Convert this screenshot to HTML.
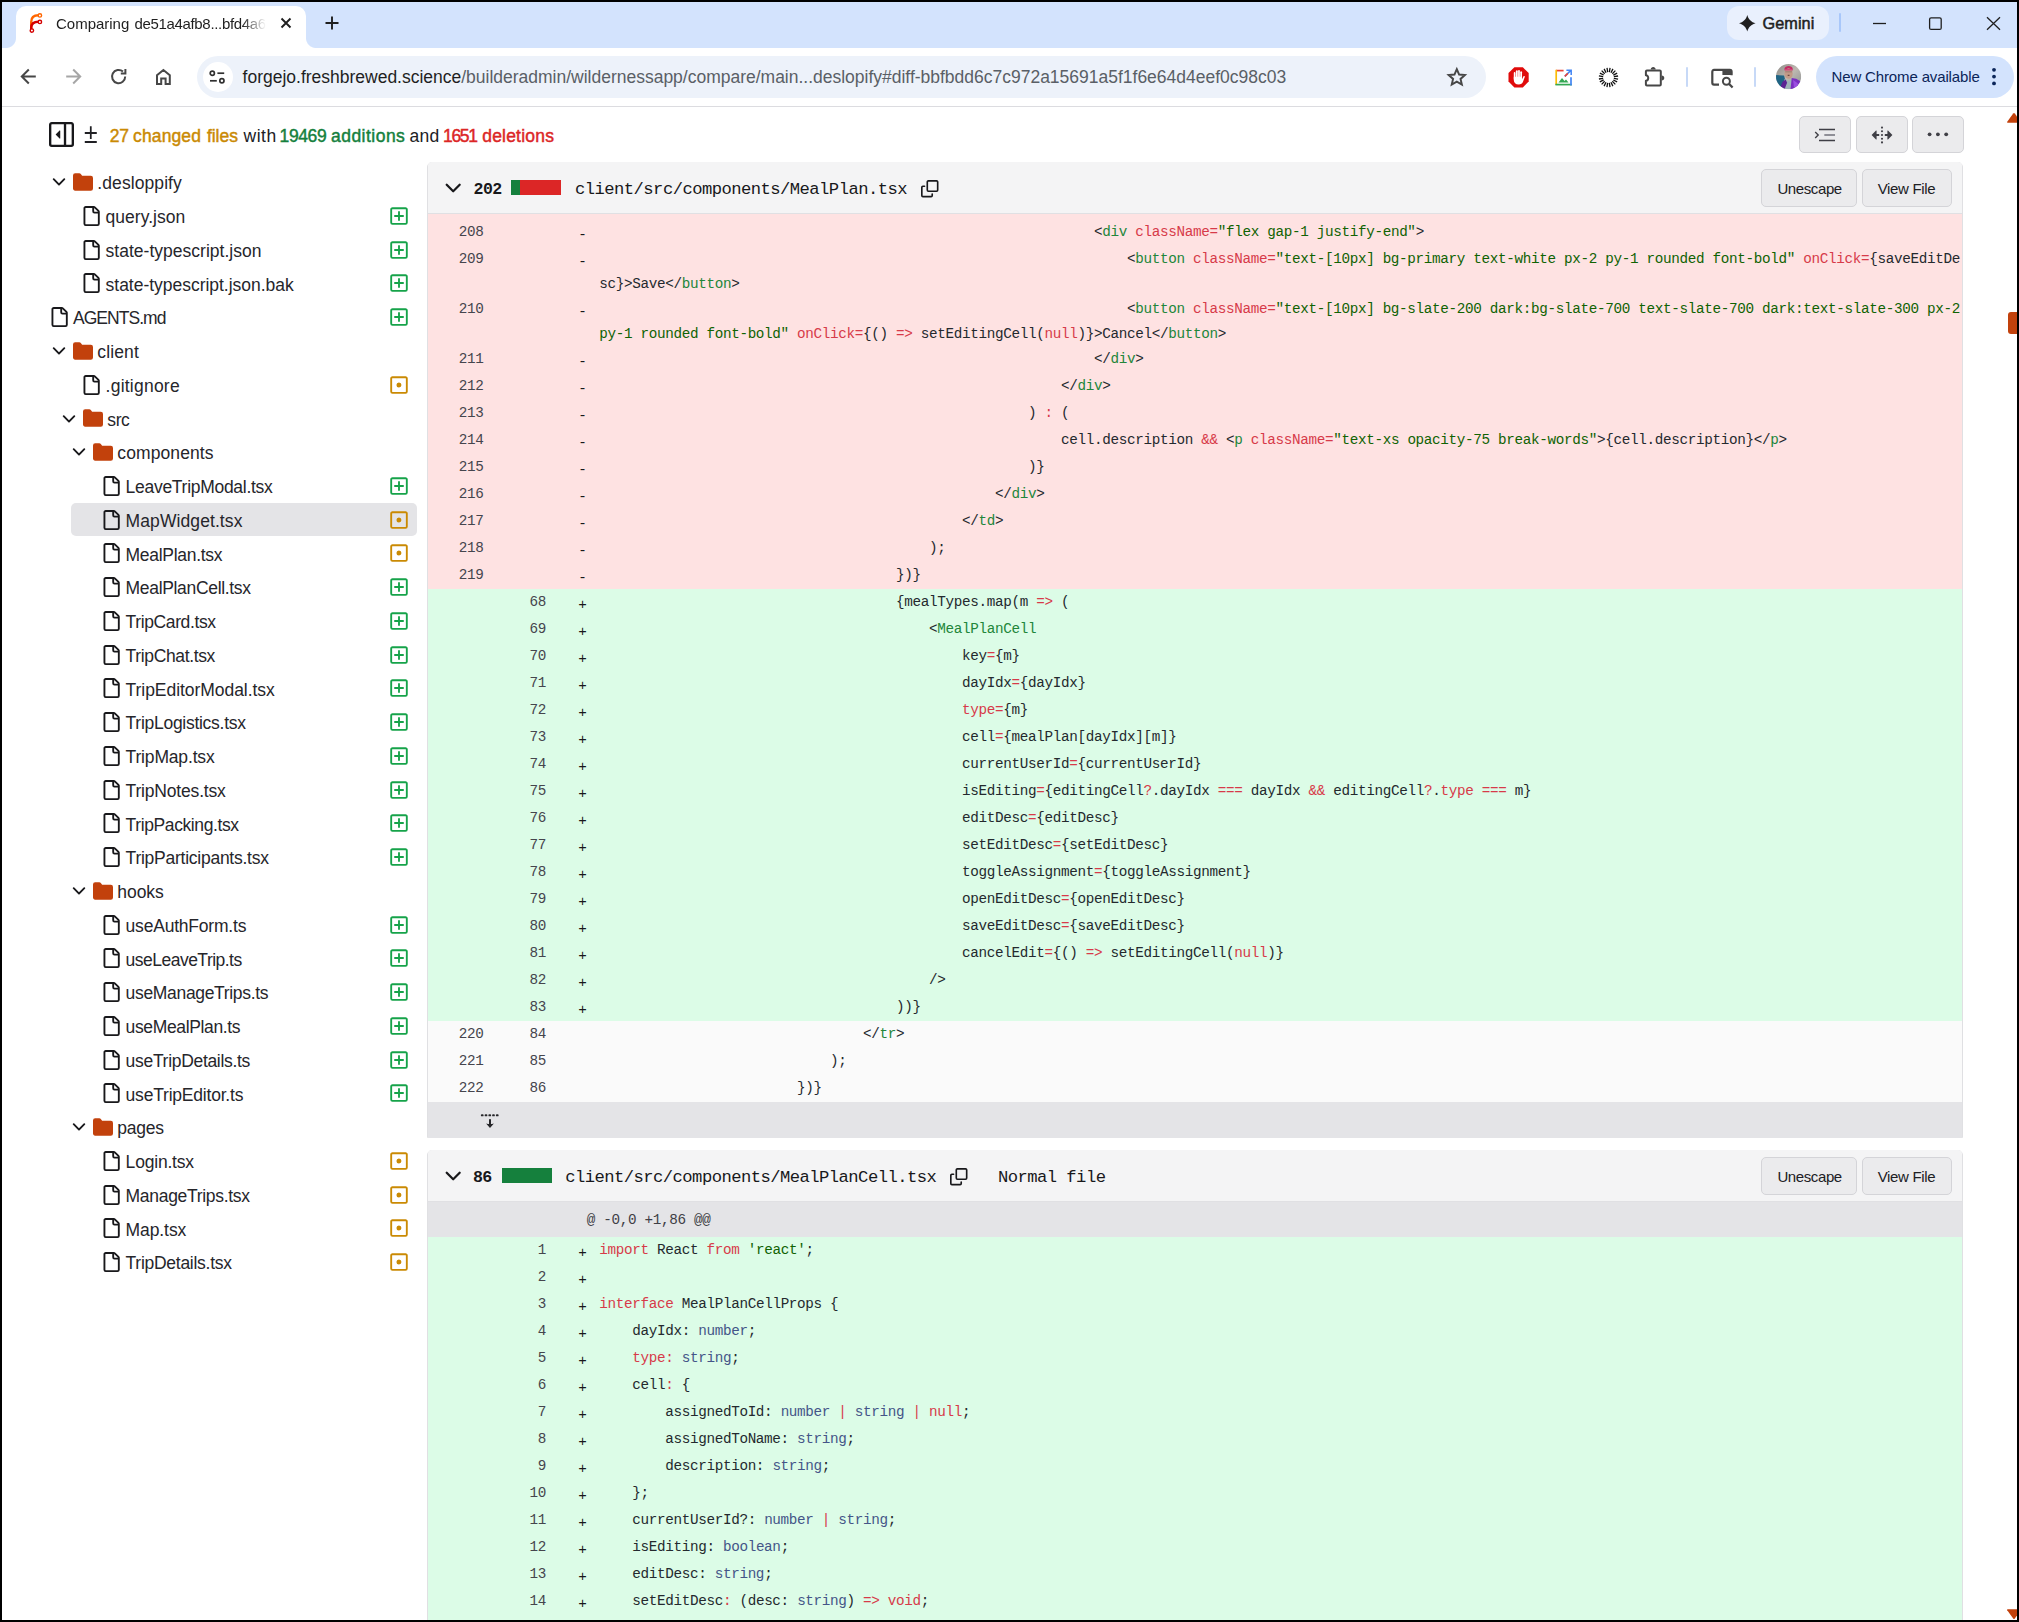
<!DOCTYPE html>
<html lang="en">
<head>
<meta charset="utf-8">
<title>Comparing de51a4afb8...bfd4a6</title>
<style>
html,body{margin:0;padding:0}
body{width:2019px;height:1622px;overflow:hidden;position:relative;background:#000;font-family:"Liberation Sans",sans-serif;color:#18181b}
.abs{position:absolute}
#win{position:absolute;left:2px;top:2px;width:2015px;height:1618px;background:#fff}
#strip{position:absolute;left:2px;top:2px;width:2015px;height:46px;background:#d3e3fd}
#tab{position:absolute;left:16px;top:5.5px;width:290px;height:43px;background:#fff;border-radius:10px 10px 0 0}
.tcl{position:absolute;top:38px;width:10px;height:10px}
#toolbar{position:absolute;left:2px;top:48px;width:2015px;height:58px;background:#fff}
#tbline{position:absolute;left:2px;top:106px;width:2015px;height:1px;background:#dcdce0}
#omni{position:absolute;left:196.5px;top:56px;width:1289.5px;height:41.6px;border-radius:21px;background:#edf2fa}
.t{position:absolute;white-space:pre;line-height:1;transform-origin:0 0}
svg{position:absolute;overflow:visible}
/* sidebar */
.row{position:absolute;height:32.5px}
.sel{position:absolute;left:71px;width:346px;height:32.5px;background:#e4e4e7;border-radius:5px}
.fn{position:absolute;white-space:pre;font-size:17.5px;line-height:20px;color:#26262b}
/* diff */
.box{position:absolute;left:427px;width:1536px;box-sizing:border-box;border:1px solid #e0e0e3;background:#fafafa}
.hdr{position:absolute;left:428px;width:1534px;background:#f4f4f5;border-bottom:1px solid #e0e0e3;box-sizing:border-box;border-radius:4px 4px 0 0}
.btn{position:absolute;box-sizing:border-box;background:#ebebed;border:1px solid #d4d4d8;border-radius:5px}
.m{font-family:"Liberation Mono",monospace}
.ln{position:absolute;left:428px;width:1534px;height:27px}
.ln>div,.ln>code{position:absolute;top:0;font-family:"Liberation Mono",monospace;font-size:14.3px;letter-spacing:-0.333px;line-height:27px;white-space:pre}
.ln>.a{left:0;width:55.6px;text-align:right;color:#45454d}
.ln>.b{left:70px;width:48px;text-align:right;color:#45454d}
.ln>.g{left:150.2px;top:2.6px;color:#18181b}
.ln>code{left:171.2px;color:#24292e}
.del{background:#fee2e2}
.add{background:#dcfce7}
.ctx{background:#fafafa}
.k{color:#d73a49}.nt{color:#22863a}.st{color:#106303}.kt{color:#445588}
</style>
</head>
<body>
<div id="win"></div>
<div id="strip"></div>
<div id="tab"></div>
<div class="tcl" style="left:6px;background:radial-gradient(circle at 0 0,#d3e3fd 9.5px,#fff 10.5px)"></div>
<div class="tcl" style="left:306px;background:radial-gradient(circle at 100% 0,#d3e3fd 9.5px,#fff 10.5px)"></div>
<div id="toolbar"></div>
<div id="tbline"></div>
<div id="omni"></div>

<!-- tab -->
<svg style="left:29px;top:11.3px" width="14" height="24" viewBox="0 0 14 24">
<path d="M2.2 19V11C2.2 6.5 5 4.3 9.6 4.3" fill="none" stroke="#ff6600" stroke-width="2.4"/>
<path d="M2.2 19V17C2.2 12.5 5 10.8 9.6 10.8" fill="none" stroke="#d40000" stroke-width="2.4"/>
<circle cx="10.9" cy="4.4" r="1.7" fill="#fff" stroke="#ff6600" stroke-width="1.4"/>
<circle cx="10.9" cy="10.9" r="1.7" fill="#fff" stroke="#d40000" stroke-width="1.4"/>
<circle cx="2.9" cy="19.6" r="1.7" fill="#fff" stroke="#d40000" stroke-width="1.4"/>
</svg>
<div class="t" id="tabtitle" style="left:56px;top:12.8px;font-size:15px;letter-spacing:-0.2px;color:#1f1f1f;width:212px;height:22px;padding-top:3px;overflow:hidden;-webkit-mask-image:linear-gradient(90deg,#000 186px,transparent 210px);mask-image:linear-gradient(90deg,#000 186px,transparent 210px)"><span style="letter-spacing:-0.01px;word-spacing:1px">Comparing </span><span style="letter-spacing:-0.33px">de51a4afb8...bfd4a6c</span></div>
<svg style="left:280px;top:17px" width="12" height="12" viewBox="0 0 12 12"><path d="M1.5 1.5L10.5 10.5M10.5 1.5L1.5 10.5" stroke="#1f1f1f" stroke-width="1.9" fill="none"/></svg>
<svg style="left:325px;top:16px" width="14" height="14" viewBox="0 0 14 14"><path d="M7 0.5V13.5M0.5 7H13.5" stroke="#1f1f1f" stroke-width="1.9" fill="none"/></svg>
<!-- gemini -->
<div class="abs" style="left:1727px;top:6px;width:102px;height:34px;border-radius:12px;background:#e9f0fd"></div>
<svg style="left:1738.8px;top:14.8px" width="16.6" height="16.6" viewBox="0 0 16 16"><path d="M8 0C9 4 12 7 16 8C12 9 9 12 8 16C7 12 4 9 0 8C4 7 7 4 8 0Z" fill="#1f1f1f"/></svg>
<div class="t" style="left:1762.5px;top:15px;font-size:16.25px;color:#1f1f1f;letter-spacing:0.06px;-webkit-text-stroke:0.5px #1f1f1f">Gemini</div>
<div class="abs" style="left:1839px;top:13px;width:2px;height:19px;background:#a8c7fa;border-radius:1px"></div>
<!-- window controls -->
<svg style="left:1873px;top:17px" width="130" height="14" viewBox="0 0 130 14">
<path d="M0 6.5H13" stroke="#1f1f1f" stroke-width="1.3" fill="none"/>
<rect x="56.6" y="0.8" width="11.6" height="11.6" rx="1.5" fill="none" stroke="#1f1f1f" stroke-width="1.3"/>
<path d="M114 0.3L127 12.7M127 0.3L114 12.7" stroke="#1f1f1f" stroke-width="1.3" fill="none"/>
</svg>
<!-- nav icons -->
<svg style="left:20px;top:68px" width="160" height="18" viewBox="0 0 160 18">
<g fill="none" stroke="#474747" stroke-width="2">
<path d="M15.8 8.5H2M8.8 1.5L1.8 8.5L8.8 15.5"/>
<path d="M46.2 8.5H60M53.2 1.5L60.2 8.5L53.2 15.5" stroke="#a6a6a6"/>
<path d="M105.2 8.5A6.6 6.6 0 1 1 103 3.6M105.4 1V5.6H100.8"/>
<path d="M137 16V7.2L143.4 2L149.8 7.2V16H145.6V10.6H141.2V16Z"/>
</g></svg>
<div class="abs" style="left:203px;top:62px;width:29.5px;height:29.5px;border-radius:15px;background:#fff"></div>
<svg style="left:209px;top:69px" width="17" height="16" viewBox="0 0 17 16">
<g fill="none" stroke="#303030" stroke-width="1.7"><circle cx="3.3" cy="4.2" r="2.1"/><path d="M8.4 4.2H15.2"/><circle cx="12.9" cy="11.8" r="2.1"/><path d="M1 11.8H7.8"/></g></svg>
<div class="t" id="url" style="left:242.6px;top:69.2px;font-size:17.5px;color:#1f1f1f;letter-spacing:-0.008px">forgejo.freshbrewed.science<span style="color:#5a5f66">/builderadmin/wildernessapp/compare/main...deslopify#diff-bbfbdd6c7c972a15691a5f1f6e64d4eef0c98c03</span></div>
<!-- star -->
<svg style="left:1446.6px;top:67.4px" width="19.6" height="19" viewBox="0 0 21 20"><path d="M10.5 2.2L13 7.9L19.2 8.5L14.5 12.6L15.9 18.6L10.5 15.4L5.1 18.6L6.5 12.6L1.8 8.5L8 7.9Z" fill="none" stroke="#474747" stroke-width="2.1" stroke-linejoin="miter"/></svg>
<!-- adblock -->
<svg style="left:1508px;top:67px" width="21.2" height="20.6" viewBox="0 0 21 21"><path d="M6.2 0.2H14.8L20.8 6.2V14.8L14.8 20.8H6.2L0.2 14.8V6.2Z" fill="#e00b0b"/><g fill="#fff"><rect x="5.6" y="5.2" width="1.8" height="8" rx=".9"/><rect x="7.8" y="3.4" width="1.8" height="9" rx=".9"/><rect x="10" y="3" width="1.8" height="9" rx=".9"/><rect x="12.2" y="4.4" width="1.8" height="9" rx=".9"/><path d="M5.6 10H14V12.4L15.4 9.6C15.9 8.7 17.2 9.2 16.8 10.3L15 15C14.3 16.7 12.8 17.8 10.6 17.8C7.4 17.8 5.6 15.9 5.6 13.2Z"/></g></svg>
<!-- color picture icon -->
<svg style="left:1555px;top:69px" width="17" height="17" viewBox="0 0 17 17">
<path d="M1 1.6H8.6" stroke="#ea4335" stroke-width="1.7"/><path d="M1.2 0.8V16" stroke="#fbbc05" stroke-width="1.7"/><path d="M0.4 15.6H16.8" stroke="#34a853" stroke-width="1.7"/><path d="M16 8.2V16.4" stroke="#4285f4" stroke-width="1.7"/>
<path d="M3.5 13.5L7 9L9.5 12L11 10.5L13.5 13.5Z" fill="#34a853"/>
<path d="M9.8 7.4L15.8 1.4M11.4 1.2H16.2V6" stroke="#4285f4" stroke-width="1.5" fill="none"/><path d="M9.8 7.4L12.8 4.4" stroke="#ea4335" stroke-width="1.5"/>
</svg>
<!-- sun icon -->
<svg style="left:1598px;top:67px" width="21" height="21" viewBox="-10.5 -10.5 21 21" id="sun"><path d="M5.33 0.86L9.58 1.55M4.80 2.47L8.63 4.43M3.81 3.83L6.84 6.88M2.44 4.82L4.38 8.66M0.83 5.34L1.49 9.58M-0.86 5.33L-1.55 9.58M-2.47 4.80L-4.43 8.63M-3.83 3.81L-6.88 6.84M-4.82 2.44L-8.66 4.38M-5.34 0.83L-9.58 1.49M-5.33 -0.86L-9.58 -1.55M-4.80 -2.47L-8.63 -4.43M-3.81 -3.83L-6.84 -6.88M-2.44 -4.82L-4.38 -8.66M-0.83 -5.34L-1.49 -9.58M0.86 -5.33L1.55 -9.58M2.47 -4.80L4.43 -8.63M3.83 -3.81L6.88 -6.84M4.82 -2.44L8.66 -4.38M5.34 -0.83L9.58 -1.49" stroke="#111" stroke-width="1.3" fill="none"/></svg>
<!-- puzzle -->
<svg style="left:1644px;top:65.5px" width="22" height="22" viewBox="0 0 22 22"><path d="M1.9 5.4Q1.9 4.4 2.9 4.4H15.8Q16.8 4.4 16.8 5.4V18.4Q16.8 19.4 15.8 19.4H2.9Q1.9 19.4 1.9 18.4V14.7C5 14.7 5 9.3 1.9 9.3Z" fill="none" stroke="#474747" stroke-width="2" stroke-linejoin="round"/><path d="M6.7 3.6C6.7 0 11.7 0 11.7 3.6ZM17.6 9.4C21.2 9.4 21.2 14.4 17.6 14.4Z" fill="#474747"/></svg>
<div class="abs" style="left:1686px;top:67px;width:2px;height:20px;background:#c7d9f7;border-radius:1px"></div>
<div class="abs" style="left:1754px;top:67px;width:2px;height:20px;background:#c7d9f7;border-radius:1px"></div>
<!-- tab search -->
<svg style="left:1711px;top:68px" width="23" height="21" viewBox="0 0 23 21"><path d="M8 16.6H3C2 16.6 1.3 15.8 1.3 14.8V3.7C1.3 2.7 2 1.9 3 1.9H18.8C19.8 1.9 20.6 2.7 20.6 3.7V7.2" fill="none" stroke="#474747" stroke-width="2.2"/><path d="M11.4 1.9H20.6V7H11.4Z" fill="#474747"/><circle cx="15.4" cy="13.2" r="3.5" fill="none" stroke="#474747" stroke-width="2"/><path d="M17.9 15.8L21.6 19.5" stroke="#474747" stroke-width="2.3"/></svg>
<!-- avatar -->
<svg style="left:1776px;top:63.8px" width="25.2" height="25.2" viewBox="0 0 25 25"><defs><clipPath id="avc"><circle cx="12.5" cy="12.5" r="12.5"/></clipPath><linearGradient id="avg" x1="0" y1="0" x2="1" y2="1"><stop offset="0" stop-color="#8c8a86"/><stop offset="0.5" stop-color="#bdb8b0"/><stop offset="1" stop-color="#8a8f93"/></linearGradient></defs><g clip-path="url(#avc)"><rect width="25" height="25" fill="url(#avg)"/><path d="M0 11L8 11.5L9.5 17L4 25H0Z" fill="#1f6484"/><path d="M8.4 4.6C8.8 1 16.2 1 16.6 4.6L16.3 6.2H8.7Z" fill="#c22a63"/><ellipse cx="12.5" cy="9.4" rx="4.1" ry="5.2" fill="#c29a88"/><path d="M8.6 5H16.4V6.4H8.6Z" fill="#d2447a"/><path d="M9.2 7.4H15.8V8.3H9.2Z" fill="#8f7068"/><path d="M11.6 10.6H13.4V12H11.6Z" fill="#6e4a40"/><path d="M8.5 15L12.5 17L16 14.6L17 25H5.5Z" fill="#9db3b8"/><path d="M3.5 25L6.5 17.5L9.6 15.4L11 18.5L8.5 25Z" fill="#5b2393"/><path d="M25 25V17.5L20 14.6L15.6 14L14.4 25Z" fill="#7a2ec0"/><path d="M17 16L21.5 19L23 25H18Z" fill="#9a4ee0"/></g></svg>
<!-- update pill -->
<div class="abs" style="left:1816px;top:55.5px;width:198px;height:42px;border-radius:21px;background:#d3e3fd"></div>
<div class="t" style="left:1831.5px;top:68.6px;font-size:15px;color:#0b2559;letter-spacing:-0.14px" id="ncr">New Chrome available</div>
<svg style="left:1991px;top:66px" width="6" height="21" viewBox="0 0 6 21"><circle cx="3" cy="3.8" r="1.9" fill="#0b2559"/><circle cx="3" cy="10.6" r="1.9" fill="#0b2559"/><circle cx="3" cy="17.4" r="1.9" fill="#0b2559"/></svg>

<!-- page header -->
<svg style="left:49px;top:122px" width="25" height="25" viewBox="0 0 16 16"><path d="M6.823 7.823a.25.25 0 0 1 0 .354l-2.396 2.396A.25.25 0 0 1 4 10.396V5.604a.25.25 0 0 1 .427-.177Z" fill="#18181b" transform="translate(11.2 0) scale(-1 1)"/><path d="M1.75 0h12.5C15.216 0 16 .784 16 1.75v12.5A1.75 1.75 0 0 1 14.25 16H1.75A1.75 1.75 0 0 1 0 14.25V1.75C0 .784.784 0 1.75 0ZM1.5 1.75v12.5c0 .138.112.25.25.25H9.5v-13H1.75a.25.25 0 0 0-.25.25ZM11 14.5h3.25a.25.25 0 0 0 .25-.25V1.75a.25.25 0 0 0-.25-.25H11Z" fill="#18181b"/></svg>
<div class="t" id="pm" style="left:84.3px;top:119.2px;font-size:19px;color:#202024;transform:scale(1.3,1.5)">±</div>
<div class="t" style="left:109.7px;top:128.1px;font-size:17.5px;color:#ca8a04;-webkit-text-stroke:0.45px #ca8a04;letter-spacing:-0.100px">27</div>
<div class="t" style="left:133.1px;top:128.1px;font-size:17.5px;color:#ca8a04;-webkit-text-stroke:0.45px #ca8a04;letter-spacing:0.117px">changed</div>
<div class="t" style="left:206.9px;top:128.1px;font-size:17.5px;color:#ca8a04;-webkit-text-stroke:0.45px #ca8a04;letter-spacing:-0.025px">files</div>
<div class="t" style="left:243.6px;top:128.1px;font-size:17.5px;color:#202024;letter-spacing:0.500px">with</div>
<div class="t" style="left:279.6px;top:128.1px;font-size:17.5px;color:#15803d;-webkit-text-stroke:0.45px #15803d;letter-spacing:-0.4px">19469</div>
<div class="t" style="left:331.0px;top:128.1px;font-size:17.5px;color:#15803d;-webkit-text-stroke:0.45px #15803d;letter-spacing:0.475px">additions</div>
<div class="t" style="left:409.6px;top:128.1px;font-size:17.5px;color:#202024;letter-spacing:0.200px">and</div>
<div class="t" style="left:443px;top:128.1px;font-size:17.5px;color:#dc2626;-webkit-text-stroke:0.45px #dc2626;letter-spacing:-1.3px">1651</div>
<div class="t" style="left:482.2px;top:128.1px;font-size:17.5px;color:#dc2626;-webkit-text-stroke:0.45px #dc2626;letter-spacing:0.212px">deletions</div>
<!-- toolbar buttons -->
<div class="btn" style="left:1799px;top:116px;width:52px;height:37px"></div>
<div class="btn" style="left:1856px;top:116px;width:52px;height:37px"></div>
<div class="btn" style="left:1912px;top:116px;width:52px;height:37px"></div>
<svg style="left:1814px;top:127px" width="23" height="16" viewBox="0 0 23 16"><g fill="none" stroke="#3f3f46" stroke-width="1.5"><path d="M5 2.4H21M5 13.5H21"/><path d="M10.3 8H21" stroke="#71717a"/><path d="M1.2 4.9L4.2 8L1.2 11.1" stroke-width="1.4"/></g></svg>
<svg style="left:1871px;top:126px" width="22" height="18" viewBox="0 0 22 18"><g fill="#3f3f46"><path d="M0.6 9L5 4.6Q5.6 4.2 5.6 5V7.9H8.2V10.1H5.6V13Q5.6 13.8 5 13.4Z"/><path d="M21.4 9L17 4.6Q16.4 4.2 16.4 5V7.9H13.8V10.1H16.4V13Q16.4 13.8 17 13.4Z"/><circle cx="11" cy="1.6" r="1.05"/><circle cx="11" cy="5.3" r="1.05"/><circle cx="11" cy="9" r="1.05"/><circle cx="11" cy="12.7" r="1.05"/><circle cx="11" cy="16.4" r="1.05"/></g></svg>
<svg style="left:1927px;top:132px" width="22" height="5" viewBox="0 0 22 5"><circle cx="2.6" cy="2.3" r="1.9" fill="#3f3f46"/><circle cx="10.9" cy="2.3" r="1.9" fill="#3f3f46"/><circle cx="19.2" cy="2.3" r="1.9" fill="#3f3f46"/></svg>
<!-- scrollbar -->
<svg style="left:2005px;top:112px" width="12" height="12" viewBox="0 0 12 12"><path d="M2.2 9.8L8.2 1.6Q9 0.6 9.8 1.6L12 4.6V10.8H2.8Q1.6 10.8 2.2 9.8Z" fill="#c2410c"/></svg>
<div class="abs" style="left:2008px;top:311.5px;width:9px;height:22px;border-radius:3px 0 0 3px;background:#c2410c"></div>
<svg style="left:2005px;top:1608px" width="12" height="12" viewBox="0 0 12 12"><path d="M2.2 2.2L8.2 10.4Q9 11.4 9.8 10.4L12 7.4V1.2H2.8Q1.6 1.2 2.2 2.2Z" fill="#c2410c"/></svg>

<svg style="left:48.50px;top:172.40px" width="20" height="20" viewBox="0 0 16 16"><path d="M12.78 5.22a.749.749 0 0 1 0 1.06l-4.25 4.25a.749.749 0 0 1-1.06 0L3.22 6.28a.749.749 0 1 1 1.06-1.06L8 8.939l3.72-3.719a.749.749 0 0 1 1.06 0Z" fill="#18181b"/></svg>
<svg style="left:73.00px;top:172.10px" width="20" height="20" viewBox="0 0 16 16"><path d="M1.75 1A1.75 1.75 0 0 0 0 2.75v10.5C0 14.216.784 15 1.75 15h12.5A1.75 1.75 0 0 0 16 13.25v-8.5A1.75 1.75 0 0 0 14.25 3H7.5a.25.25 0 0 1-.2-.1l-.9-1.2C6.07 1.26 5.55 1 5 1H1.75Z" fill="#c2410c"/></svg>
<div class="fn" style="left:97.30px;top:173.30px;letter-spacing:0.084px">.desloppify</div>
<svg style="left:80.70px;top:205.85px" width="20" height="20" viewBox="0 0 16 16"><path d="M2 1.75C2 .784 2.784 0 3.75 0h6.586c.464 0 .909.184 1.237.513l2.914 2.914c.329.328.513.773.513 1.237v9.586A1.75 1.75 0 0 1 13.25 16h-9.5A1.75 1.75 0 0 1 2 14.25Zm1.75-.25a.25.25 0 0 0-.25.25v12.5c0 .138.112.25.25.25h9.5a.25.25 0 0 0 .25-.25V6h-2.75A1.75 1.75 0 0 1 9 4.25V1.5Zm6.75.062V4.25c0 .138.112.25.25.25h2.688l-.011-.013-2.914-2.914-.013-.011Z" fill="#18181b"/></svg>
<div class="fn" style="left:105.60px;top:207.05px;letter-spacing:0.015px">query.json</div>
<svg style="left:388.75px;top:205.85px" width="20" height="20" viewBox="0 0 16 16"><path d="M2.75 1h10.5c.966 0 1.75.784 1.75 1.75v10.5A1.75 1.75 0 0 1 13.25 15H2.75A1.75 1.75 0 0 1 1 13.25V2.75C1 1.784 1.784 1 2.75 1Zm10.5 1.5H2.75a.25.25 0 0 0-.25.25v10.5c0 .138.112.25.25.25h10.5a.25.25 0 0 0 .25-.25V2.75a.25.25 0 0 0-.25-.25ZM8 4a.75.75 0 0 1 .75.75v2.5h2.5a.75.75 0 0 1 0 1.5h-2.5v2.5a.75.75 0 0 1-1.5 0v-2.5h-2.5a.75.75 0 0 1 0-1.5h2.5v-2.5A.75.75 0 0 1 8 4Z" fill="#16a34a"/></svg>
<svg style="left:80.70px;top:239.60px" width="20" height="20" viewBox="0 0 16 16"><path d="M2 1.75C2 .784 2.784 0 3.75 0h6.586c.464 0 .909.184 1.237.513l2.914 2.914c.329.328.513.773.513 1.237v9.586A1.75 1.75 0 0 1 13.25 16h-9.5A1.75 1.75 0 0 1 2 14.25Zm1.75-.25a.25.25 0 0 0-.25.25v12.5c0 .138.112.25.25.25h9.5a.25.25 0 0 0 .25-.25V6h-2.75A1.75 1.75 0 0 1 9 4.25V1.5Zm6.75.062V4.25c0 .138.112.25.25.25h2.688l-.011-.013-2.914-2.914-.013-.011Z" fill="#18181b"/></svg>
<div class="fn" style="left:105.60px;top:240.80px;letter-spacing:0.013px">state-typescript.json</div>
<svg style="left:388.75px;top:239.60px" width="20" height="20" viewBox="0 0 16 16"><path d="M2.75 1h10.5c.966 0 1.75.784 1.75 1.75v10.5A1.75 1.75 0 0 1 13.25 15H2.75A1.75 1.75 0 0 1 1 13.25V2.75C1 1.784 1.784 1 2.75 1Zm10.5 1.5H2.75a.25.25 0 0 0-.25.25v10.5c0 .138.112.25.25.25h10.5a.25.25 0 0 0 .25-.25V2.75a.25.25 0 0 0-.25-.25ZM8 4a.75.75 0 0 1 .75.75v2.5h2.5a.75.75 0 0 1 0 1.5h-2.5v2.5a.75.75 0 0 1-1.5 0v-2.5h-2.5a.75.75 0 0 1 0-1.5h2.5v-2.5A.75.75 0 0 1 8 4Z" fill="#16a34a"/></svg>
<svg style="left:80.70px;top:273.35px" width="20" height="20" viewBox="0 0 16 16"><path d="M2 1.75C2 .784 2.784 0 3.75 0h6.586c.464 0 .909.184 1.237.513l2.914 2.914c.329.328.513.773.513 1.237v9.586A1.75 1.75 0 0 1 13.25 16h-9.5A1.75 1.75 0 0 1 2 14.25Zm1.75-.25a.25.25 0 0 0-.25.25v12.5c0 .138.112.25.25.25h9.5a.25.25 0 0 0 .25-.25V6h-2.75A1.75 1.75 0 0 1 9 4.25V1.5Zm6.75.062V4.25c0 .138.112.25.25.25h2.688l-.011-.013-2.914-2.914-.013-.011Z" fill="#18181b"/></svg>
<div class="fn" style="left:105.60px;top:274.55px;letter-spacing:-0.024px">state-typescript.json.bak</div>
<svg style="left:388.75px;top:273.35px" width="20" height="20" viewBox="0 0 16 16"><path d="M2.75 1h10.5c.966 0 1.75.784 1.75 1.75v10.5A1.75 1.75 0 0 1 13.25 15H2.75A1.75 1.75 0 0 1 1 13.25V2.75C1 1.784 1.784 1 2.75 1Zm10.5 1.5H2.75a.25.25 0 0 0-.25.25v10.5c0 .138.112.25.25.25h10.5a.25.25 0 0 0 .25-.25V2.75a.25.25 0 0 0-.25-.25ZM8 4a.75.75 0 0 1 .75.75v2.5h2.5a.75.75 0 0 1 0 1.5h-2.5v2.5a.75.75 0 0 1-1.5 0v-2.5h-2.5a.75.75 0 0 1 0-1.5h2.5v-2.5A.75.75 0 0 1 8 4Z" fill="#16a34a"/></svg>
<svg style="left:49.20px;top:307.10px" width="20" height="20" viewBox="0 0 16 16"><path d="M2 1.75C2 .784 2.784 0 3.75 0h6.586c.464 0 .909.184 1.237.513l2.914 2.914c.329.328.513.773.513 1.237v9.586A1.75 1.75 0 0 1 13.25 16h-9.5A1.75 1.75 0 0 1 2 14.25Zm1.75-.25a.25.25 0 0 0-.25.25v12.5c0 .138.112.25.25.25h9.5a.25.25 0 0 0 .25-.25V6h-2.75A1.75 1.75 0 0 1 9 4.25V1.5Zm6.75.062V4.25c0 .138.112.25.25.25h2.688l-.011-.013-2.914-2.914-.013-.011Z" fill="#18181b"/></svg>
<div class="fn" style="left:73.00px;top:308.30px;letter-spacing:-0.971px">AGENTS.md</div>
<svg style="left:388.75px;top:307.10px" width="20" height="20" viewBox="0 0 16 16"><path d="M2.75 1h10.5c.966 0 1.75.784 1.75 1.75v10.5A1.75 1.75 0 0 1 13.25 15H2.75A1.75 1.75 0 0 1 1 13.25V2.75C1 1.784 1.784 1 2.75 1Zm10.5 1.5H2.75a.25.25 0 0 0-.25.25v10.5c0 .138.112.25.25.25h10.5a.25.25 0 0 0 .25-.25V2.75a.25.25 0 0 0-.25-.25ZM8 4a.75.75 0 0 1 .75.75v2.5h2.5a.75.75 0 0 1 0 1.5h-2.5v2.5a.75.75 0 0 1-1.5 0v-2.5h-2.5a.75.75 0 0 1 0-1.5h2.5v-2.5A.75.75 0 0 1 8 4Z" fill="#16a34a"/></svg>
<svg style="left:48.50px;top:341.15px" width="20" height="20" viewBox="0 0 16 16"><path d="M12.78 5.22a.749.749 0 0 1 0 1.06l-4.25 4.25a.749.749 0 0 1-1.06 0L3.22 6.28a.749.749 0 1 1 1.06-1.06L8 8.939l3.72-3.719a.749.749 0 0 1 1.06 0Z" fill="#18181b"/></svg>
<svg style="left:73.00px;top:340.85px" width="20" height="20" viewBox="0 0 16 16"><path d="M1.75 1A1.75 1.75 0 0 0 0 2.75v10.5C0 14.216.784 15 1.75 15h12.5A1.75 1.75 0 0 0 16 13.25v-8.5A1.75 1.75 0 0 0 14.25 3H7.5a.25.25 0 0 1-.2-.1l-.9-1.2C6.07 1.26 5.55 1 5 1H1.75Z" fill="#c2410c"/></svg>
<div class="fn" style="left:97.30px;top:342.05px;letter-spacing:0.123px">client</div>
<svg style="left:80.70px;top:374.60px" width="20" height="20" viewBox="0 0 16 16"><path d="M2 1.75C2 .784 2.784 0 3.75 0h6.586c.464 0 .909.184 1.237.513l2.914 2.914c.329.328.513.773.513 1.237v9.586A1.75 1.75 0 0 1 13.25 16h-9.5A1.75 1.75 0 0 1 2 14.25Zm1.75-.25a.25.25 0 0 0-.25.25v12.5c0 .138.112.25.25.25h9.5a.25.25 0 0 0 .25-.25V6h-2.75A1.75 1.75 0 0 1 9 4.25V1.5Zm6.75.062V4.25c0 .138.112.25.25.25h2.688l-.011-.013-2.914-2.914-.013-.011Z" fill="#18181b"/></svg>
<div class="fn" style="left:105.60px;top:375.80px;letter-spacing:0.230px">.gitignore</div>
<svg style="left:388.75px;top:374.60px" width="20" height="20" viewBox="0 0 16 16"><path d="M13.25 1c.966 0 1.75.784 1.75 1.75v10.5A1.75 1.75 0 0 1 13.25 15H2.75A1.75 1.75 0 0 1 1 13.25V2.75C1 1.784 1.784 1 2.75 1ZM2.75 2.5a.25.25 0 0 0-.25.25v10.5c0 .138.112.25.25.25h10.5a.25.25 0 0 0 .25-.25V2.75a.25.25 0 0 0-.25-.25ZM8 10a2 2 0 1 1-.001-3.999A2 2 0 0 1 8 10Z" fill="#ca8a04"/></svg>
<svg style="left:58.50px;top:408.65px" width="20" height="20" viewBox="0 0 16 16"><path d="M12.78 5.22a.749.749 0 0 1 0 1.06l-4.25 4.25a.749.749 0 0 1-1.06 0L3.22 6.28a.749.749 0 1 1 1.06-1.06L8 8.939l3.72-3.719a.749.749 0 0 1 1.06 0Z" fill="#18181b"/></svg>
<svg style="left:83.00px;top:408.35px" width="20" height="20" viewBox="0 0 16 16"><path d="M1.75 1A1.75 1.75 0 0 0 0 2.75v10.5C0 14.216.784 15 1.75 15h12.5A1.75 1.75 0 0 0 16 13.25v-8.5A1.75 1.75 0 0 0 14.25 3H7.5a.25.25 0 0 1-.2-.1l-.9-1.2C6.07 1.26 5.55 1 5 1H1.75Z" fill="#c2410c"/></svg>
<div class="fn" style="left:107.30px;top:409.55px;letter-spacing:-0.409px">src</div>
<svg style="left:68.50px;top:442.40px" width="20" height="20" viewBox="0 0 16 16"><path d="M12.78 5.22a.749.749 0 0 1 0 1.06l-4.25 4.25a.749.749 0 0 1-1.06 0L3.22 6.28a.749.749 0 1 1 1.06-1.06L8 8.939l3.72-3.719a.749.749 0 0 1 1.06 0Z" fill="#18181b"/></svg>
<svg style="left:93.00px;top:442.10px" width="20" height="20" viewBox="0 0 16 16"><path d="M1.75 1A1.75 1.75 0 0 0 0 2.75v10.5C0 14.216.784 15 1.75 15h12.5A1.75 1.75 0 0 0 16 13.25v-8.5A1.75 1.75 0 0 0 14.25 3H7.5a.25.25 0 0 1-.2-.1l-.9-1.2C6.07 1.26 5.55 1 5 1H1.75Z" fill="#c2410c"/></svg>
<div class="fn" style="left:117.30px;top:443.30px;letter-spacing:0.096px">components</div>
<svg style="left:100.70px;top:475.85px" width="20" height="20" viewBox="0 0 16 16"><path d="M2 1.75C2 .784 2.784 0 3.75 0h6.586c.464 0 .909.184 1.237.513l2.914 2.914c.329.328.513.773.513 1.237v9.586A1.75 1.75 0 0 1 13.25 16h-9.5A1.75 1.75 0 0 1 2 14.25Zm1.75-.25a.25.25 0 0 0-.25.25v12.5c0 .138.112.25.25.25h9.5a.25.25 0 0 0 .25-.25V6h-2.75A1.75 1.75 0 0 1 9 4.25V1.5Zm6.75.062V4.25c0 .138.112.25.25.25h2.688l-.011-.013-2.914-2.914-.013-.011Z" fill="#18181b"/></svg>
<div class="fn" style="left:125.60px;top:477.05px;letter-spacing:-0.287px">LeaveTripModal.tsx</div>
<svg style="left:388.75px;top:475.85px" width="20" height="20" viewBox="0 0 16 16"><path d="M2.75 1h10.5c.966 0 1.75.784 1.75 1.75v10.5A1.75 1.75 0 0 1 13.25 15H2.75A1.75 1.75 0 0 1 1 13.25V2.75C1 1.784 1.784 1 2.75 1Zm10.5 1.5H2.75a.25.25 0 0 0-.25.25v10.5c0 .138.112.25.25.25h10.5a.25.25 0 0 0 .25-.25V2.75a.25.25 0 0 0-.25-.25ZM8 4a.75.75 0 0 1 .75.75v2.5h2.5a.75.75 0 0 1 0 1.5h-2.5v2.5a.75.75 0 0 1-1.5 0v-2.5h-2.5a.75.75 0 0 1 0-1.5h2.5v-2.5A.75.75 0 0 1 8 4Z" fill="#16a34a"/></svg>
<div class="sel" style="top:503.35px"></div>
<svg style="left:100.70px;top:509.60px" width="20" height="20" viewBox="0 0 16 16"><path d="M2 1.75C2 .784 2.784 0 3.75 0h6.586c.464 0 .909.184 1.237.513l2.914 2.914c.329.328.513.773.513 1.237v9.586A1.75 1.75 0 0 1 13.25 16h-9.5A1.75 1.75 0 0 1 2 14.25Zm1.75-.25a.25.25 0 0 0-.25.25v12.5c0 .138.112.25.25.25h9.5a.25.25 0 0 0 .25-.25V6h-2.75A1.75 1.75 0 0 1 9 4.25V1.5Zm6.75.062V4.25c0 .138.112.25.25.25h2.688l-.011-.013-2.914-2.914-.013-.011Z" fill="#18181b"/></svg>
<div class="fn" style="left:125.60px;top:510.80px;letter-spacing:0.090px">MapWidget.tsx</div>
<svg style="left:388.75px;top:509.60px" width="20" height="20" viewBox="0 0 16 16"><path d="M13.25 1c.966 0 1.75.784 1.75 1.75v10.5A1.75 1.75 0 0 1 13.25 15H2.75A1.75 1.75 0 0 1 1 13.25V2.75C1 1.784 1.784 1 2.75 1ZM2.75 2.5a.25.25 0 0 0-.25.25v10.5c0 .138.112.25.25.25h10.5a.25.25 0 0 0 .25-.25V2.75a.25.25 0 0 0-.25-.25ZM8 10a2 2 0 1 1-.001-3.999A2 2 0 0 1 8 10Z" fill="#ca8a04"/></svg>
<svg style="left:100.70px;top:543.35px" width="20" height="20" viewBox="0 0 16 16"><path d="M2 1.75C2 .784 2.784 0 3.75 0h6.586c.464 0 .909.184 1.237.513l2.914 2.914c.329.328.513.773.513 1.237v9.586A1.75 1.75 0 0 1 13.25 16h-9.5A1.75 1.75 0 0 1 2 14.25Zm1.75-.25a.25.25 0 0 0-.25.25v12.5c0 .138.112.25.25.25h9.5a.25.25 0 0 0 .25-.25V6h-2.75A1.75 1.75 0 0 1 9 4.25V1.5Zm6.75.062V4.25c0 .138.112.25.25.25h2.688l-.011-.013-2.914-2.914-.013-.011Z" fill="#18181b"/></svg>
<div class="fn" style="left:125.60px;top:544.55px;letter-spacing:-0.299px">MealPlan.tsx</div>
<svg style="left:388.75px;top:543.35px" width="20" height="20" viewBox="0 0 16 16"><path d="M13.25 1c.966 0 1.75.784 1.75 1.75v10.5A1.75 1.75 0 0 1 13.25 15H2.75A1.75 1.75 0 0 1 1 13.25V2.75C1 1.784 1.784 1 2.75 1ZM2.75 2.5a.25.25 0 0 0-.25.25v10.5c0 .138.112.25.25.25h10.5a.25.25 0 0 0 .25-.25V2.75a.25.25 0 0 0-.25-.25ZM8 10a2 2 0 1 1-.001-3.999A2 2 0 0 1 8 10Z" fill="#ca8a04"/></svg>
<svg style="left:100.70px;top:577.10px" width="20" height="20" viewBox="0 0 16 16"><path d="M2 1.75C2 .784 2.784 0 3.75 0h6.586c.464 0 .909.184 1.237.513l2.914 2.914c.329.328.513.773.513 1.237v9.586A1.75 1.75 0 0 1 13.25 16h-9.5A1.75 1.75 0 0 1 2 14.25Zm1.75-.25a.25.25 0 0 0-.25.25v12.5c0 .138.112.25.25.25h9.5a.25.25 0 0 0 .25-.25V6h-2.75A1.75 1.75 0 0 1 9 4.25V1.5Zm6.75.062V4.25c0 .138.112.25.25.25h2.688l-.011-.013-2.914-2.914-.013-.011Z" fill="#18181b"/></svg>
<div class="fn" style="left:125.60px;top:578.30px;letter-spacing:-0.327px">MealPlanCell.tsx</div>
<svg style="left:388.75px;top:577.10px" width="20" height="20" viewBox="0 0 16 16"><path d="M2.75 1h10.5c.966 0 1.75.784 1.75 1.75v10.5A1.75 1.75 0 0 1 13.25 15H2.75A1.75 1.75 0 0 1 1 13.25V2.75C1 1.784 1.784 1 2.75 1Zm10.5 1.5H2.75a.25.25 0 0 0-.25.25v10.5c0 .138.112.25.25.25h10.5a.25.25 0 0 0 .25-.25V2.75a.25.25 0 0 0-.25-.25ZM8 4a.75.75 0 0 1 .75.75v2.5h2.5a.75.75 0 0 1 0 1.5h-2.5v2.5a.75.75 0 0 1-1.5 0v-2.5h-2.5a.75.75 0 0 1 0-1.5h2.5v-2.5A.75.75 0 0 1 8 4Z" fill="#16a34a"/></svg>
<svg style="left:100.70px;top:610.85px" width="20" height="20" viewBox="0 0 16 16"><path d="M2 1.75C2 .784 2.784 0 3.75 0h6.586c.464 0 .909.184 1.237.513l2.914 2.914c.329.328.513.773.513 1.237v9.586A1.75 1.75 0 0 1 13.25 16h-9.5A1.75 1.75 0 0 1 2 14.25Zm1.75-.25a.25.25 0 0 0-.25.25v12.5c0 .138.112.25.25.25h9.5a.25.25 0 0 0 .25-.25V6h-2.75A1.75 1.75 0 0 1 9 4.25V1.5Zm6.75.062V4.25c0 .138.112.25.25.25h2.688l-.011-.013-2.914-2.914-.013-.011Z" fill="#18181b"/></svg>
<div class="fn" style="left:125.60px;top:612.05px;letter-spacing:-0.380px">TripCard.tsx</div>
<svg style="left:388.75px;top:610.85px" width="20" height="20" viewBox="0 0 16 16"><path d="M2.75 1h10.5c.966 0 1.75.784 1.75 1.75v10.5A1.75 1.75 0 0 1 13.25 15H2.75A1.75 1.75 0 0 1 1 13.25V2.75C1 1.784 1.784 1 2.75 1Zm10.5 1.5H2.75a.25.25 0 0 0-.25.25v10.5c0 .138.112.25.25.25h10.5a.25.25 0 0 0 .25-.25V2.75a.25.25 0 0 0-.25-.25ZM8 4a.75.75 0 0 1 .75.75v2.5h2.5a.75.75 0 0 1 0 1.5h-2.5v2.5a.75.75 0 0 1-1.5 0v-2.5h-2.5a.75.75 0 0 1 0-1.5h2.5v-2.5A.75.75 0 0 1 8 4Z" fill="#16a34a"/></svg>
<svg style="left:100.70px;top:644.60px" width="20" height="20" viewBox="0 0 16 16"><path d="M2 1.75C2 .784 2.784 0 3.75 0h6.586c.464 0 .909.184 1.237.513l2.914 2.914c.329.328.513.773.513 1.237v9.586A1.75 1.75 0 0 1 13.25 16h-9.5A1.75 1.75 0 0 1 2 14.25Zm1.75-.25a.25.25 0 0 0-.25.25v12.5c0 .138.112.25.25.25h9.5a.25.25 0 0 0 .25-.25V6h-2.75A1.75 1.75 0 0 1 9 4.25V1.5Zm6.75.062V4.25c0 .138.112.25.25.25h2.688l-.011-.013-2.914-2.914-.013-.011Z" fill="#18181b"/></svg>
<div class="fn" style="left:125.60px;top:645.80px;letter-spacing:-0.357px">TripChat.tsx</div>
<svg style="left:388.75px;top:644.60px" width="20" height="20" viewBox="0 0 16 16"><path d="M2.75 1h10.5c.966 0 1.75.784 1.75 1.75v10.5A1.75 1.75 0 0 1 13.25 15H2.75A1.75 1.75 0 0 1 1 13.25V2.75C1 1.784 1.784 1 2.75 1Zm10.5 1.5H2.75a.25.25 0 0 0-.25.25v10.5c0 .138.112.25.25.25h10.5a.25.25 0 0 0 .25-.25V2.75a.25.25 0 0 0-.25-.25ZM8 4a.75.75 0 0 1 .75.75v2.5h2.5a.75.75 0 0 1 0 1.5h-2.5v2.5a.75.75 0 0 1-1.5 0v-2.5h-2.5a.75.75 0 0 1 0-1.5h2.5v-2.5A.75.75 0 0 1 8 4Z" fill="#16a34a"/></svg>
<svg style="left:100.70px;top:678.35px" width="20" height="20" viewBox="0 0 16 16"><path d="M2 1.75C2 .784 2.784 0 3.75 0h6.586c.464 0 .909.184 1.237.513l2.914 2.914c.329.328.513.773.513 1.237v9.586A1.75 1.75 0 0 1 13.25 16h-9.5A1.75 1.75 0 0 1 2 14.25Zm1.75-.25a.25.25 0 0 0-.25.25v12.5c0 .138.112.25.25.25h9.5a.25.25 0 0 0 .25-.25V6h-2.75A1.75 1.75 0 0 1 9 4.25V1.5Zm6.75.062V4.25c0 .138.112.25.25.25h2.688l-.011-.013-2.914-2.914-.013-.011Z" fill="#18181b"/></svg>
<div class="fn" style="left:125.60px;top:679.55px;letter-spacing:-0.052px">TripEditorModal.tsx</div>
<svg style="left:388.75px;top:678.35px" width="20" height="20" viewBox="0 0 16 16"><path d="M2.75 1h10.5c.966 0 1.75.784 1.75 1.75v10.5A1.75 1.75 0 0 1 13.25 15H2.75A1.75 1.75 0 0 1 1 13.25V2.75C1 1.784 1.784 1 2.75 1Zm10.5 1.5H2.75a.25.25 0 0 0-.25.25v10.5c0 .138.112.25.25.25h10.5a.25.25 0 0 0 .25-.25V2.75a.25.25 0 0 0-.25-.25ZM8 4a.75.75 0 0 1 .75.75v2.5h2.5a.75.75 0 0 1 0 1.5h-2.5v2.5a.75.75 0 0 1-1.5 0v-2.5h-2.5a.75.75 0 0 1 0-1.5h2.5v-2.5A.75.75 0 0 1 8 4Z" fill="#16a34a"/></svg>
<svg style="left:100.70px;top:712.10px" width="20" height="20" viewBox="0 0 16 16"><path d="M2 1.75C2 .784 2.784 0 3.75 0h6.586c.464 0 .909.184 1.237.513l2.914 2.914c.329.328.513.773.513 1.237v9.586A1.75 1.75 0 0 1 13.25 16h-9.5A1.75 1.75 0 0 1 2 14.25Zm1.75-.25a.25.25 0 0 0-.25.25v12.5c0 .138.112.25.25.25h9.5a.25.25 0 0 0 .25-.25V6h-2.75A1.75 1.75 0 0 1 9 4.25V1.5Zm6.75.062V4.25c0 .138.112.25.25.25h2.688l-.011-.013-2.914-2.914-.013-.011Z" fill="#18181b"/></svg>
<div class="fn" style="left:125.60px;top:713.30px;letter-spacing:-0.277px">TripLogistics.tsx</div>
<svg style="left:388.75px;top:712.10px" width="20" height="20" viewBox="0 0 16 16"><path d="M2.75 1h10.5c.966 0 1.75.784 1.75 1.75v10.5A1.75 1.75 0 0 1 13.25 15H2.75A1.75 1.75 0 0 1 1 13.25V2.75C1 1.784 1.784 1 2.75 1Zm10.5 1.5H2.75a.25.25 0 0 0-.25.25v10.5c0 .138.112.25.25.25h10.5a.25.25 0 0 0 .25-.25V2.75a.25.25 0 0 0-.25-.25ZM8 4a.75.75 0 0 1 .75.75v2.5h2.5a.75.75 0 0 1 0 1.5h-2.5v2.5a.75.75 0 0 1-1.5 0v-2.5h-2.5a.75.75 0 0 1 0-1.5h2.5v-2.5A.75.75 0 0 1 8 4Z" fill="#16a34a"/></svg>
<svg style="left:100.70px;top:745.85px" width="20" height="20" viewBox="0 0 16 16"><path d="M2 1.75C2 .784 2.784 0 3.75 0h6.586c.464 0 .909.184 1.237.513l2.914 2.914c.329.328.513.773.513 1.237v9.586A1.75 1.75 0 0 1 13.25 16h-9.5A1.75 1.75 0 0 1 2 14.25Zm1.75-.25a.25.25 0 0 0-.25.25v12.5c0 .138.112.25.25.25h9.5a.25.25 0 0 0 .25-.25V6h-2.75A1.75 1.75 0 0 1 9 4.25V1.5Zm6.75.062V4.25c0 .138.112.25.25.25h2.688l-.011-.013-2.914-2.914-.013-.011Z" fill="#18181b"/></svg>
<div class="fn" style="left:125.60px;top:747.05px;letter-spacing:-0.170px">TripMap.tsx</div>
<svg style="left:388.75px;top:745.85px" width="20" height="20" viewBox="0 0 16 16"><path d="M2.75 1h10.5c.966 0 1.75.784 1.75 1.75v10.5A1.75 1.75 0 0 1 13.25 15H2.75A1.75 1.75 0 0 1 1 13.25V2.75C1 1.784 1.784 1 2.75 1Zm10.5 1.5H2.75a.25.25 0 0 0-.25.25v10.5c0 .138.112.25.25.25h10.5a.25.25 0 0 0 .25-.25V2.75a.25.25 0 0 0-.25-.25ZM8 4a.75.75 0 0 1 .75.75v2.5h2.5a.75.75 0 0 1 0 1.5h-2.5v2.5a.75.75 0 0 1-1.5 0v-2.5h-2.5a.75.75 0 0 1 0-1.5h2.5v-2.5A.75.75 0 0 1 8 4Z" fill="#16a34a"/></svg>
<svg style="left:100.70px;top:779.60px" width="20" height="20" viewBox="0 0 16 16"><path d="M2 1.75C2 .784 2.784 0 3.75 0h6.586c.464 0 .909.184 1.237.513l2.914 2.914c.329.328.513.773.513 1.237v9.586A1.75 1.75 0 0 1 13.25 16h-9.5A1.75 1.75 0 0 1 2 14.25Zm1.75-.25a.25.25 0 0 0-.25.25v12.5c0 .138.112.25.25.25h9.5a.25.25 0 0 0 .25-.25V6h-2.75A1.75 1.75 0 0 1 9 4.25V1.5Zm6.75.062V4.25c0 .138.112.25.25.25h2.688l-.011-.013-2.914-2.914-.013-.011Z" fill="#18181b"/></svg>
<div class="fn" style="left:125.60px;top:780.80px;letter-spacing:-0.180px">TripNotes.tsx</div>
<svg style="left:388.75px;top:779.60px" width="20" height="20" viewBox="0 0 16 16"><path d="M2.75 1h10.5c.966 0 1.75.784 1.75 1.75v10.5A1.75 1.75 0 0 1 13.25 15H2.75A1.75 1.75 0 0 1 1 13.25V2.75C1 1.784 1.784 1 2.75 1Zm10.5 1.5H2.75a.25.25 0 0 0-.25.25v10.5c0 .138.112.25.25.25h10.5a.25.25 0 0 0 .25-.25V2.75a.25.25 0 0 0-.25-.25ZM8 4a.75.75 0 0 1 .75.75v2.5h2.5a.75.75 0 0 1 0 1.5h-2.5v2.5a.75.75 0 0 1-1.5 0v-2.5h-2.5a.75.75 0 0 1 0-1.5h2.5v-2.5A.75.75 0 0 1 8 4Z" fill="#16a34a"/></svg>
<svg style="left:100.70px;top:813.35px" width="20" height="20" viewBox="0 0 16 16"><path d="M2 1.75C2 .784 2.784 0 3.75 0h6.586c.464 0 .909.184 1.237.513l2.914 2.914c.329.328.513.773.513 1.237v9.586A1.75 1.75 0 0 1 13.25 16h-9.5A1.75 1.75 0 0 1 2 14.25Zm1.75-.25a.25.25 0 0 0-.25.25v12.5c0 .138.112.25.25.25h9.5a.25.25 0 0 0 .25-.25V6h-2.75A1.75 1.75 0 0 1 9 4.25V1.5Zm6.75.062V4.25c0 .138.112.25.25.25h2.688l-.011-.013-2.914-2.914-.013-.011Z" fill="#18181b"/></svg>
<div class="fn" style="left:125.60px;top:814.55px;letter-spacing:-0.392px">TripPacking.tsx</div>
<svg style="left:388.75px;top:813.35px" width="20" height="20" viewBox="0 0 16 16"><path d="M2.75 1h10.5c.966 0 1.75.784 1.75 1.75v10.5A1.75 1.75 0 0 1 13.25 15H2.75A1.75 1.75 0 0 1 1 13.25V2.75C1 1.784 1.784 1 2.75 1Zm10.5 1.5H2.75a.25.25 0 0 0-.25.25v10.5c0 .138.112.25.25.25h10.5a.25.25 0 0 0 .25-.25V2.75a.25.25 0 0 0-.25-.25ZM8 4a.75.75 0 0 1 .75.75v2.5h2.5a.75.75 0 0 1 0 1.5h-2.5v2.5a.75.75 0 0 1-1.5 0v-2.5h-2.5a.75.75 0 0 1 0-1.5h2.5v-2.5A.75.75 0 0 1 8 4Z" fill="#16a34a"/></svg>
<svg style="left:100.70px;top:847.10px" width="20" height="20" viewBox="0 0 16 16"><path d="M2 1.75C2 .784 2.784 0 3.75 0h6.586c.464 0 .909.184 1.237.513l2.914 2.914c.329.328.513.773.513 1.237v9.586A1.75 1.75 0 0 1 13.25 16h-9.5A1.75 1.75 0 0 1 2 14.25Zm1.75-.25a.25.25 0 0 0-.25.25v12.5c0 .138.112.25.25.25h9.5a.25.25 0 0 0 .25-.25V6h-2.75A1.75 1.75 0 0 1 9 4.25V1.5Zm6.75.062V4.25c0 .138.112.25.25.25h2.688l-.011-.013-2.914-2.914-.013-.011Z" fill="#18181b"/></svg>
<div class="fn" style="left:125.60px;top:848.30px;letter-spacing:-0.253px">TripParticipants.tsx</div>
<svg style="left:388.75px;top:847.10px" width="20" height="20" viewBox="0 0 16 16"><path d="M2.75 1h10.5c.966 0 1.75.784 1.75 1.75v10.5A1.75 1.75 0 0 1 13.25 15H2.75A1.75 1.75 0 0 1 1 13.25V2.75C1 1.784 1.784 1 2.75 1Zm10.5 1.5H2.75a.25.25 0 0 0-.25.25v10.5c0 .138.112.25.25.25h10.5a.25.25 0 0 0 .25-.25V2.75a.25.25 0 0 0-.25-.25ZM8 4a.75.75 0 0 1 .75.75v2.5h2.5a.75.75 0 0 1 0 1.5h-2.5v2.5a.75.75 0 0 1-1.5 0v-2.5h-2.5a.75.75 0 0 1 0-1.5h2.5v-2.5A.75.75 0 0 1 8 4Z" fill="#16a34a"/></svg>
<svg style="left:68.50px;top:881.15px" width="20" height="20" viewBox="0 0 16 16"><path d="M12.78 5.22a.749.749 0 0 1 0 1.06l-4.25 4.25a.749.749 0 0 1-1.06 0L3.22 6.28a.749.749 0 1 1 1.06-1.06L8 8.939l3.72-3.719a.749.749 0 0 1 1.06 0Z" fill="#18181b"/></svg>
<svg style="left:93.00px;top:880.85px" width="20" height="20" viewBox="0 0 16 16"><path d="M1.75 1A1.75 1.75 0 0 0 0 2.75v10.5C0 14.216.784 15 1.75 15h12.5A1.75 1.75 0 0 0 16 13.25v-8.5A1.75 1.75 0 0 0 14.25 3H7.5a.25.25 0 0 1-.2-.1l-.9-1.2C6.07 1.26 5.55 1 5 1H1.75Z" fill="#c2410c"/></svg>
<div class="fn" style="left:117.30px;top:882.05px;letter-spacing:-0.041px">hooks</div>
<svg style="left:100.70px;top:914.60px" width="20" height="20" viewBox="0 0 16 16"><path d="M2 1.75C2 .784 2.784 0 3.75 0h6.586c.464 0 .909.184 1.237.513l2.914 2.914c.329.328.513.773.513 1.237v9.586A1.75 1.75 0 0 1 13.25 16h-9.5A1.75 1.75 0 0 1 2 14.25Zm1.75-.25a.25.25 0 0 0-.25.25v12.5c0 .138.112.25.25.25h9.5a.25.25 0 0 0 .25-.25V6h-2.75A1.75 1.75 0 0 1 9 4.25V1.5Zm6.75.062V4.25c0 .138.112.25.25.25h2.688l-.011-.013-2.914-2.914-.013-.011Z" fill="#18181b"/></svg>
<div class="fn" style="left:125.60px;top:915.80px;letter-spacing:-0.209px">useAuthForm.ts</div>
<svg style="left:388.75px;top:914.60px" width="20" height="20" viewBox="0 0 16 16"><path d="M2.75 1h10.5c.966 0 1.75.784 1.75 1.75v10.5A1.75 1.75 0 0 1 13.25 15H2.75A1.75 1.75 0 0 1 1 13.25V2.75C1 1.784 1.784 1 2.75 1Zm10.5 1.5H2.75a.25.25 0 0 0-.25.25v10.5c0 .138.112.25.25.25h10.5a.25.25 0 0 0 .25-.25V2.75a.25.25 0 0 0-.25-.25ZM8 4a.75.75 0 0 1 .75.75v2.5h2.5a.75.75 0 0 1 0 1.5h-2.5v2.5a.75.75 0 0 1-1.5 0v-2.5h-2.5a.75.75 0 0 1 0-1.5h2.5v-2.5A.75.75 0 0 1 8 4Z" fill="#16a34a"/></svg>
<svg style="left:100.70px;top:948.35px" width="20" height="20" viewBox="0 0 16 16"><path d="M2 1.75C2 .784 2.784 0 3.75 0h6.586c.464 0 .909.184 1.237.513l2.914 2.914c.329.328.513.773.513 1.237v9.586A1.75 1.75 0 0 1 13.25 16h-9.5A1.75 1.75 0 0 1 2 14.25Zm1.75-.25a.25.25 0 0 0-.25.25v12.5c0 .138.112.25.25.25h9.5a.25.25 0 0 0 .25-.25V6h-2.75A1.75 1.75 0 0 1 9 4.25V1.5Zm6.75.062V4.25c0 .138.112.25.25.25h2.688l-.011-.013-2.914-2.914-.013-.011Z" fill="#18181b"/></svg>
<div class="fn" style="left:125.60px;top:949.55px;letter-spacing:-0.517px">useLeaveTrip.ts</div>
<svg style="left:388.75px;top:948.35px" width="20" height="20" viewBox="0 0 16 16"><path d="M2.75 1h10.5c.966 0 1.75.784 1.75 1.75v10.5A1.75 1.75 0 0 1 13.25 15H2.75A1.75 1.75 0 0 1 1 13.25V2.75C1 1.784 1.784 1 2.75 1Zm10.5 1.5H2.75a.25.25 0 0 0-.25.25v10.5c0 .138.112.25.25.25h10.5a.25.25 0 0 0 .25-.25V2.75a.25.25 0 0 0-.25-.25ZM8 4a.75.75 0 0 1 .75.75v2.5h2.5a.75.75 0 0 1 0 1.5h-2.5v2.5a.75.75 0 0 1-1.5 0v-2.5h-2.5a.75.75 0 0 1 0-1.5h2.5v-2.5A.75.75 0 0 1 8 4Z" fill="#16a34a"/></svg>
<svg style="left:100.70px;top:982.10px" width="20" height="20" viewBox="0 0 16 16"><path d="M2 1.75C2 .784 2.784 0 3.75 0h6.586c.464 0 .909.184 1.237.513l2.914 2.914c.329.328.513.773.513 1.237v9.586A1.75 1.75 0 0 1 13.25 16h-9.5A1.75 1.75 0 0 1 2 14.25Zm1.75-.25a.25.25 0 0 0-.25.25v12.5c0 .138.112.25.25.25h9.5a.25.25 0 0 0 .25-.25V6h-2.75A1.75 1.75 0 0 1 9 4.25V1.5Zm6.75.062V4.25c0 .138.112.25.25.25h2.688l-.011-.013-2.914-2.914-.013-.011Z" fill="#18181b"/></svg>
<div class="fn" style="left:125.60px;top:983.30px;letter-spacing:-0.328px">useManageTrips.ts</div>
<svg style="left:388.75px;top:982.10px" width="20" height="20" viewBox="0 0 16 16"><path d="M2.75 1h10.5c.966 0 1.75.784 1.75 1.75v10.5A1.75 1.75 0 0 1 13.25 15H2.75A1.75 1.75 0 0 1 1 13.25V2.75C1 1.784 1.784 1 2.75 1Zm10.5 1.5H2.75a.25.25 0 0 0-.25.25v10.5c0 .138.112.25.25.25h10.5a.25.25 0 0 0 .25-.25V2.75a.25.25 0 0 0-.25-.25ZM8 4a.75.75 0 0 1 .75.75v2.5h2.5a.75.75 0 0 1 0 1.5h-2.5v2.5a.75.75 0 0 1-1.5 0v-2.5h-2.5a.75.75 0 0 1 0-1.5h2.5v-2.5A.75.75 0 0 1 8 4Z" fill="#16a34a"/></svg>
<svg style="left:100.70px;top:1015.85px" width="20" height="20" viewBox="0 0 16 16"><path d="M2 1.75C2 .784 2.784 0 3.75 0h6.586c.464 0 .909.184 1.237.513l2.914 2.914c.329.328.513.773.513 1.237v9.586A1.75 1.75 0 0 1 13.25 16h-9.5A1.75 1.75 0 0 1 2 14.25Zm1.75-.25a.25.25 0 0 0-.25.25v12.5c0 .138.112.25.25.25h9.5a.25.25 0 0 0 .25-.25V6h-2.75A1.75 1.75 0 0 1 9 4.25V1.5Zm6.75.062V4.25c0 .138.112.25.25.25h2.688l-.011-.013-2.914-2.914-.013-.011Z" fill="#18181b"/></svg>
<div class="fn" style="left:125.60px;top:1017.05px;letter-spacing:-0.361px">useMealPlan.ts</div>
<svg style="left:388.75px;top:1015.85px" width="20" height="20" viewBox="0 0 16 16"><path d="M2.75 1h10.5c.966 0 1.75.784 1.75 1.75v10.5A1.75 1.75 0 0 1 13.25 15H2.75A1.75 1.75 0 0 1 1 13.25V2.75C1 1.784 1.784 1 2.75 1Zm10.5 1.5H2.75a.25.25 0 0 0-.25.25v10.5c0 .138.112.25.25.25h10.5a.25.25 0 0 0 .25-.25V2.75a.25.25 0 0 0-.25-.25ZM8 4a.75.75 0 0 1 .75.75v2.5h2.5a.75.75 0 0 1 0 1.5h-2.5v2.5a.75.75 0 0 1-1.5 0v-2.5h-2.5a.75.75 0 0 1 0-1.5h2.5v-2.5A.75.75 0 0 1 8 4Z" fill="#16a34a"/></svg>
<svg style="left:100.70px;top:1049.60px" width="20" height="20" viewBox="0 0 16 16"><path d="M2 1.75C2 .784 2.784 0 3.75 0h6.586c.464 0 .909.184 1.237.513l2.914 2.914c.329.328.513.773.513 1.237v9.586A1.75 1.75 0 0 1 13.25 16h-9.5A1.75 1.75 0 0 1 2 14.25Zm1.75-.25a.25.25 0 0 0-.25.25v12.5c0 .138.112.25.25.25h9.5a.25.25 0 0 0 .25-.25V6h-2.75A1.75 1.75 0 0 1 9 4.25V1.5Zm6.75.062V4.25c0 .138.112.25.25.25h2.688l-.011-.013-2.914-2.914-.013-.011Z" fill="#18181b"/></svg>
<div class="fn" style="left:125.60px;top:1050.80px;letter-spacing:-0.310px">useTripDetails.ts</div>
<svg style="left:388.75px;top:1049.60px" width="20" height="20" viewBox="0 0 16 16"><path d="M2.75 1h10.5c.966 0 1.75.784 1.75 1.75v10.5A1.75 1.75 0 0 1 13.25 15H2.75A1.75 1.75 0 0 1 1 13.25V2.75C1 1.784 1.784 1 2.75 1Zm10.5 1.5H2.75a.25.25 0 0 0-.25.25v10.5c0 .138.112.25.25.25h10.5a.25.25 0 0 0 .25-.25V2.75a.25.25 0 0 0-.25-.25ZM8 4a.75.75 0 0 1 .75.75v2.5h2.5a.75.75 0 0 1 0 1.5h-2.5v2.5a.75.75 0 0 1-1.5 0v-2.5h-2.5a.75.75 0 0 1 0-1.5h2.5v-2.5A.75.75 0 0 1 8 4Z" fill="#16a34a"/></svg>
<svg style="left:100.70px;top:1083.35px" width="20" height="20" viewBox="0 0 16 16"><path d="M2 1.75C2 .784 2.784 0 3.75 0h6.586c.464 0 .909.184 1.237.513l2.914 2.914c.329.328.513.773.513 1.237v9.586A1.75 1.75 0 0 1 13.25 16h-9.5A1.75 1.75 0 0 1 2 14.25Zm1.75-.25a.25.25 0 0 0-.25.25v12.5c0 .138.112.25.25.25h9.5a.25.25 0 0 0 .25-.25V6h-2.75A1.75 1.75 0 0 1 9 4.25V1.5Zm6.75.062V4.25c0 .138.112.25.25.25h2.688l-.011-.013-2.914-2.914-.013-.011Z" fill="#18181b"/></svg>
<div class="fn" style="left:125.60px;top:1084.55px;letter-spacing:-0.209px">useTripEditor.ts</div>
<svg style="left:388.75px;top:1083.35px" width="20" height="20" viewBox="0 0 16 16"><path d="M2.75 1h10.5c.966 0 1.75.784 1.75 1.75v10.5A1.75 1.75 0 0 1 13.25 15H2.75A1.75 1.75 0 0 1 1 13.25V2.75C1 1.784 1.784 1 2.75 1Zm10.5 1.5H2.75a.25.25 0 0 0-.25.25v10.5c0 .138.112.25.25.25h10.5a.25.25 0 0 0 .25-.25V2.75a.25.25 0 0 0-.25-.25ZM8 4a.75.75 0 0 1 .75.75v2.5h2.5a.75.75 0 0 1 0 1.5h-2.5v2.5a.75.75 0 0 1-1.5 0v-2.5h-2.5a.75.75 0 0 1 0-1.5h2.5v-2.5A.75.75 0 0 1 8 4Z" fill="#16a34a"/></svg>
<svg style="left:68.50px;top:1117.40px" width="20" height="20" viewBox="0 0 16 16"><path d="M12.78 5.22a.749.749 0 0 1 0 1.06l-4.25 4.25a.749.749 0 0 1-1.06 0L3.22 6.28a.749.749 0 1 1 1.06-1.06L8 8.939l3.72-3.719a.749.749 0 0 1 1.06 0Z" fill="#18181b"/></svg>
<svg style="left:93.00px;top:1117.10px" width="20" height="20" viewBox="0 0 16 16"><path d="M1.75 1A1.75 1.75 0 0 0 0 2.75v10.5C0 14.216.784 15 1.75 15h12.5A1.75 1.75 0 0 0 16 13.25v-8.5A1.75 1.75 0 0 0 14.25 3H7.5a.25.25 0 0 1-.2-.1l-.9-1.2C6.07 1.26 5.55 1 5 1H1.75Z" fill="#c2410c"/></svg>
<div class="fn" style="left:117.30px;top:1118.30px;letter-spacing:-0.237px">pages</div>
<svg style="left:100.70px;top:1150.85px" width="20" height="20" viewBox="0 0 16 16"><path d="M2 1.75C2 .784 2.784 0 3.75 0h6.586c.464 0 .909.184 1.237.513l2.914 2.914c.329.328.513.773.513 1.237v9.586A1.75 1.75 0 0 1 13.25 16h-9.5A1.75 1.75 0 0 1 2 14.25Zm1.75-.25a.25.25 0 0 0-.25.25v12.5c0 .138.112.25.25.25h9.5a.25.25 0 0 0 .25-.25V6h-2.75A1.75 1.75 0 0 1 9 4.25V1.5Zm6.75.062V4.25c0 .138.112.25.25.25h2.688l-.011-.013-2.914-2.914-.013-.011Z" fill="#18181b"/></svg>
<div class="fn" style="left:125.60px;top:1152.05px;letter-spacing:-0.194px">Login.tsx</div>
<svg style="left:388.75px;top:1150.85px" width="20" height="20" viewBox="0 0 16 16"><path d="M13.25 1c.966 0 1.75.784 1.75 1.75v10.5A1.75 1.75 0 0 1 13.25 15H2.75A1.75 1.75 0 0 1 1 13.25V2.75C1 1.784 1.784 1 2.75 1ZM2.75 2.5a.25.25 0 0 0-.25.25v10.5c0 .138.112.25.25.25h10.5a.25.25 0 0 0 .25-.25V2.75a.25.25 0 0 0-.25-.25ZM8 10a2 2 0 1 1-.001-3.999A2 2 0 0 1 8 10Z" fill="#ca8a04"/></svg>
<svg style="left:100.70px;top:1184.60px" width="20" height="20" viewBox="0 0 16 16"><path d="M2 1.75C2 .784 2.784 0 3.75 0h6.586c.464 0 .909.184 1.237.513l2.914 2.914c.329.328.513.773.513 1.237v9.586A1.75 1.75 0 0 1 13.25 16h-9.5A1.75 1.75 0 0 1 2 14.25Zm1.75-.25a.25.25 0 0 0-.25.25v12.5c0 .138.112.25.25.25h9.5a.25.25 0 0 0 .25-.25V6h-2.75A1.75 1.75 0 0 1 9 4.25V1.5Zm6.75.062V4.25c0 .138.112.25.25.25h2.688l-.011-.013-2.914-2.914-.013-.011Z" fill="#18181b"/></svg>
<div class="fn" style="left:125.60px;top:1185.80px;letter-spacing:-0.308px">ManageTrips.tsx</div>
<svg style="left:388.75px;top:1184.60px" width="20" height="20" viewBox="0 0 16 16"><path d="M13.25 1c.966 0 1.75.784 1.75 1.75v10.5A1.75 1.75 0 0 1 13.25 15H2.75A1.75 1.75 0 0 1 1 13.25V2.75C1 1.784 1.784 1 2.75 1ZM2.75 2.5a.25.25 0 0 0-.25.25v10.5c0 .138.112.25.25.25h10.5a.25.25 0 0 0 .25-.25V2.75a.25.25 0 0 0-.25-.25ZM8 10a2 2 0 1 1-.001-3.999A2 2 0 0 1 8 10Z" fill="#ca8a04"/></svg>
<svg style="left:100.70px;top:1218.35px" width="20" height="20" viewBox="0 0 16 16"><path d="M2 1.75C2 .784 2.784 0 3.75 0h6.586c.464 0 .909.184 1.237.513l2.914 2.914c.329.328.513.773.513 1.237v9.586A1.75 1.75 0 0 1 13.25 16h-9.5A1.75 1.75 0 0 1 2 14.25Zm1.75-.25a.25.25 0 0 0-.25.25v12.5c0 .138.112.25.25.25h9.5a.25.25 0 0 0 .25-.25V6h-2.75A1.75 1.75 0 0 1 9 4.25V1.5Zm6.75.062V4.25c0 .138.112.25.25.25h2.688l-.011-.013-2.914-2.914-.013-.011Z" fill="#18181b"/></svg>
<div class="fn" style="left:125.60px;top:1219.55px;letter-spacing:-0.097px">Map.tsx</div>
<svg style="left:388.75px;top:1218.35px" width="20" height="20" viewBox="0 0 16 16"><path d="M13.25 1c.966 0 1.75.784 1.75 1.75v10.5A1.75 1.75 0 0 1 13.25 15H2.75A1.75 1.75 0 0 1 1 13.25V2.75C1 1.784 1.784 1 2.75 1ZM2.75 2.5a.25.25 0 0 0-.25.25v10.5c0 .138.112.25.25.25h10.5a.25.25 0 0 0 .25-.25V2.75a.25.25 0 0 0-.25-.25ZM8 10a2 2 0 1 1-.001-3.999A2 2 0 0 1 8 10Z" fill="#ca8a04"/></svg>
<svg style="left:100.70px;top:1252.10px" width="20" height="20" viewBox="0 0 16 16"><path d="M2 1.75C2 .784 2.784 0 3.75 0h6.586c.464 0 .909.184 1.237.513l2.914 2.914c.329.328.513.773.513 1.237v9.586A1.75 1.75 0 0 1 13.25 16h-9.5A1.75 1.75 0 0 1 2 14.25Zm1.75-.25a.25.25 0 0 0-.25.25v12.5c0 .138.112.25.25.25h9.5a.25.25 0 0 0 .25-.25V6h-2.75A1.75 1.75 0 0 1 9 4.25V1.5Zm6.75.062V4.25c0 .138.112.25.25.25h2.688l-.011-.013-2.914-2.914-.013-.011Z" fill="#18181b"/></svg>
<div class="fn" style="left:125.60px;top:1253.30px;letter-spacing:-0.275px">TripDetails.tsx</div>
<svg style="left:388.75px;top:1252.10px" width="20" height="20" viewBox="0 0 16 16"><path d="M13.25 1c.966 0 1.75.784 1.75 1.75v10.5A1.75 1.75 0 0 1 13.25 15H2.75A1.75 1.75 0 0 1 1 13.25V2.75C1 1.784 1.784 1 2.75 1ZM2.75 2.5a.25.25 0 0 0-.25.25v10.5c0 .138.112.25.25.25h10.5a.25.25 0 0 0 .25-.25V2.75a.25.25 0 0 0-.25-.25ZM8 10a2 2 0 1 1-.001-3.999A2 2 0 0 1 8 10Z" fill="#ca8a04"/></svg>
<div class="box" style="top:161.5px;height:976.3px;border-radius:5px 5px 0 0"></div>
<div class="hdr" style="top:162.30px;height:51.6px"></div>
<svg style="left:440.60px;top:176.10px" width="24.4" height="24.4" viewBox="0 0 16 16"><path d="M12.78 5.22a.749.749 0 0 1 0 1.06l-4.25 4.25a.749.749 0 0 1-1.06 0L3.22 6.28a.749.749 0 1 1 1.06-1.06L8 8.939l3.72-3.719a.749.749 0 0 1 1.06 0Z" fill="#18181b"/></svg>
<div class="t m" style="left:473.60px;top:181.70px;font-size:16.6px;font-weight:bold;letter-spacing:-0.6px;color:#18181b">202</div>
<div class="abs" style="left:511.00px;top:179.90px;width:50px;height:15px;background:#dc2626"></div>
<div class="abs" style="left:511.00px;top:179.90px;width:9.00px;height:15px;background:#15803d"></div>
<div class="t m" style="left:575.00px;top:181.00px;font-size:17.2px;letter-spacing:-0.55px;color:#18181b">client/src/components/MealPlan.tsx</div>
<svg style="left:920.50px;top:179.50px" width="17.5" height="17.5" viewBox="0 0 16 16"><path d="M0 6.75C0 5.784.784 5 1.75 5h1.5a.75.75 0 0 1 0 1.5h-1.5a.25.25 0 0 0-.25.25v7.5c0 .138.112.25.25.25h7.5a.25.25 0 0 0 .25-.25v-1.5a.75.75 0 0 1 1.5 0v1.5A1.75 1.75 0 0 1 9.25 16h-7.5A1.75 1.75 0 0 1 0 14.25Z" fill="#18181b"/><path d="M5 1.75C5 .784 5.784 0 6.75 0h7.5C15.216 0 16 .784 16 1.75v7.5A1.75 1.75 0 0 1 14.25 11h-7.5A1.75 1.75 0 0 1 5 9.25Zm1.75-.25a.25.25 0 0 0-.25.25v7.5c0 .138.112.25.25.25h7.5a.25.25 0 0 0 .25-.25v-7.5a.25.25 0 0 0-.25-.25Z" fill="#18181b"/></svg>
<div class="btn" style="left:1761px;top:168.90px;width:96px;height:38px"></div>
<div class="btn" style="left:1862px;top:168.90px;width:90px;height:38px"></div>
<div class="t bt" style="left:1777.4px;top:180.90px;font-size:15px;color:#202024;letter-spacing:-0.39px">Unescape</div>
<div class="t bt" style="left:1877.7px;top:180.90px;font-size:15px;color:#202024;letter-spacing:-0.33px">View File</div>
<div class="abs del" style="left:428px;top:213.9px;width:1534px;height:5px"></div>
<div class="ln del" style="top:219.20px;height:27px"><div class="a">208</div><div class="g">-</div><code>                                                            &lt;<span class="nt">div</span> <span class="k">className=</span><span class="st">"flex gap-1 justify-end"</span>&gt;</code></div>
<div class="ln del" style="top:246.20px;height:50px"><div class="a">209</div><div class="g">-</div><code>                                                                &lt;<span class="nt">button</span> <span class="k">className=</span><span class="st">"text-[10px] bg-primary text-white px-2 py-1 rounded font-bold"</span> <span class="k">onClick=</span>{saveEditDe</code><code style="top:25px">sc}&gt;Save&lt;/<span class="nt">button</span>&gt;</code></div>
<div class="ln del" style="top:296.20px;height:50px"><div class="a">210</div><div class="g">-</div><code>                                                                &lt;<span class="nt">button</span> <span class="k">className=</span><span class="st">"text-[10px] bg-slate-200 dark:bg-slate-700 text-slate-700 dark:text-slate-300 px-2</span></code><code style="top:25px"><span class="st">py-1 rounded font-bold"</span> <span class="k">onClick=</span>{() <span class="k">=&gt;</span> setEditingCell(<span class="k">null</span>)}&gt;Cancel&lt;/<span class="nt">button</span>&gt;</code></div>
<div class="ln del" style="top:346.20px;height:27px"><div class="a">211</div><div class="g">-</div><code>                                                            &lt;/<span class="nt">div</span>&gt;</code></div>
<div class="ln del" style="top:373.20px;height:27px"><div class="a">212</div><div class="g">-</div><code>                                                        &lt;/<span class="nt">div</span>&gt;</code></div>
<div class="ln del" style="top:400.20px;height:27px"><div class="a">213</div><div class="g">-</div><code>                                                    ) <span class="k">:</span> (</code></div>
<div class="ln del" style="top:427.20px;height:27px"><div class="a">214</div><div class="g">-</div><code>                                                        cell.description <span class="k">&amp;&amp;</span> &lt;<span class="nt">p</span> <span class="k">className=</span><span class="st">"text-xs opacity-75 break-words"</span>&gt;{cell.description}&lt;/<span class="nt">p</span>&gt;</code></div>
<div class="ln del" style="top:454.20px;height:27px"><div class="a">215</div><div class="g">-</div><code>                                                    )}</code></div>
<div class="ln del" style="top:481.20px;height:27px"><div class="a">216</div><div class="g">-</div><code>                                                &lt;/<span class="nt">div</span>&gt;</code></div>
<div class="ln del" style="top:508.20px;height:27px"><div class="a">217</div><div class="g">-</div><code>                                            &lt;/<span class="nt">td</span>&gt;</code></div>
<div class="ln del" style="top:535.20px;height:27px"><div class="a">218</div><div class="g">-</div><code>                                        );</code></div>
<div class="ln del" style="top:562.20px;height:27px"><div class="a">219</div><div class="g">-</div><code>                                    })}</code></div>
<div class="ln add" style="top:589.20px;height:27px"><div class="b">68</div><div class="g">+</div><code>                                    {mealTypes.map(m <span class="k">=&gt;</span> (</code></div>
<div class="ln add" style="top:616.20px;height:27px"><div class="b">69</div><div class="g">+</div><code>                                        &lt;<span class="nt">MealPlanCell</span></code></div>
<div class="ln add" style="top:643.20px;height:27px"><div class="b">70</div><div class="g">+</div><code>                                            key<span class="k">=</span>{m}</code></div>
<div class="ln add" style="top:670.20px;height:27px"><div class="b">71</div><div class="g">+</div><code>                                            dayIdx<span class="k">=</span>{dayIdx}</code></div>
<div class="ln add" style="top:697.20px;height:27px"><div class="b">72</div><div class="g">+</div><code>                                            <span class="k">type=</span>{m}</code></div>
<div class="ln add" style="top:724.20px;height:27px"><div class="b">73</div><div class="g">+</div><code>                                            cell<span class="k">=</span>{mealPlan[dayIdx][m]}</code></div>
<div class="ln add" style="top:751.20px;height:27px"><div class="b">74</div><div class="g">+</div><code>                                            currentUserId<span class="k">=</span>{currentUserId}</code></div>
<div class="ln add" style="top:778.20px;height:27px"><div class="b">75</div><div class="g">+</div><code>                                            isEditing<span class="k">=</span>{editingCell<span class="k">?</span>.dayIdx <span class="k">===</span> dayIdx <span class="k">&amp;&amp;</span> editingCell<span class="k">?</span>.<span class="k">type</span> <span class="k">===</span> m}</code></div>
<div class="ln add" style="top:805.20px;height:27px"><div class="b">76</div><div class="g">+</div><code>                                            editDesc<span class="k">=</span>{editDesc}</code></div>
<div class="ln add" style="top:832.20px;height:27px"><div class="b">77</div><div class="g">+</div><code>                                            setEditDesc<span class="k">=</span>{setEditDesc}</code></div>
<div class="ln add" style="top:859.20px;height:27px"><div class="b">78</div><div class="g">+</div><code>                                            toggleAssignment<span class="k">=</span>{toggleAssignment}</code></div>
<div class="ln add" style="top:886.20px;height:27px"><div class="b">79</div><div class="g">+</div><code>                                            openEditDesc<span class="k">=</span>{openEditDesc}</code></div>
<div class="ln add" style="top:913.20px;height:27px"><div class="b">80</div><div class="g">+</div><code>                                            saveEditDesc<span class="k">=</span>{saveEditDesc}</code></div>
<div class="ln add" style="top:940.20px;height:27px"><div class="b">81</div><div class="g">+</div><code>                                            cancelEdit<span class="k">=</span>{() <span class="k">=&gt;</span> setEditingCell(<span class="k">null</span>)}</code></div>
<div class="ln add" style="top:967.20px;height:27px"><div class="b">82</div><div class="g">+</div><code>                                        /&gt;</code></div>
<div class="ln add" style="top:994.20px;height:27px"><div class="b">83</div><div class="g">+</div><code>                                    ))}</code></div>
<div class="ln ctx" style="top:1021.20px;height:27px"><div class="a">220</div><div class="b">84</div><code>                                &lt;/<span class="nt">tr</span>&gt;</code></div>
<div class="ln ctx" style="top:1048.20px;height:27px"><div class="a">221</div><div class="b">85</div><code>                            );</code></div>
<div class="ln ctx" style="top:1075.20px;height:27px"><div class="a">222</div><div class="b">86</div><code>                        })}</code></div>
<div class="abs" style="left:428px;top:1102.20px;width:1534px;height:35.6px;background:#e4e4e7"></div>
<svg style="left:480px;top:1113px" width="20" height="16" viewBox="0 0 20 16"><g fill="#27272a"><rect x="0.9" y="1.2" width="2.7" height="2.1" rx="0.9"/><rect x="4.65" y="1.2" width="2.7" height="2.1" rx="0.9"/><rect x="8.4" y="1.2" width="2.7" height="2.1" rx="0.9"/><rect x="12.15" y="1.2" width="2.7" height="2.1" rx="0.9"/><rect x="15.9" y="1.2" width="2.7" height="2.1" rx="0.9"/><rect x="9" y="6.2" width="2" height="6"/><path d="M6.1 10.6Q10 11.6 13.9 10.6L10 14.9Z"/></g></svg>
<div class="box" style="top:1150px;height:480px;border-radius:5px 5px 0 0"></div>
<div class="hdr" style="top:1150.30px;height:51.6px"></div>
<svg style="left:440.60px;top:1164.10px" width="24.4" height="24.4" viewBox="0 0 16 16"><path d="M12.78 5.22a.749.749 0 0 1 0 1.06l-4.25 4.25a.749.749 0 0 1-1.06 0L3.22 6.28a.749.749 0 1 1 1.06-1.06L8 8.939l3.72-3.719a.749.749 0 0 1 1.06 0Z" fill="#18181b"/></svg>
<div class="t m" style="left:473.00px;top:1169.70px;font-size:16.6px;font-weight:bold;letter-spacing:-0.6px;color:#18181b">86</div>
<div class="abs" style="left:502.00px;top:1167.90px;width:50px;height:15px;background:#dc2626"></div>
<div class="abs" style="left:502.00px;top:1167.90px;width:50.00px;height:15px;background:#15803d"></div>
<div class="t m" style="left:565.20px;top:1169.00px;font-size:17.2px;letter-spacing:-0.55px;color:#18181b">client/src/components/MealPlanCell.tsx</div>
<svg style="left:950.00px;top:1167.50px" width="17.5" height="17.5" viewBox="0 0 16 16"><path d="M0 6.75C0 5.784.784 5 1.75 5h1.5a.75.75 0 0 1 0 1.5h-1.5a.25.25 0 0 0-.25.25v7.5c0 .138.112.25.25.25h7.5a.25.25 0 0 0 .25-.25v-1.5a.75.75 0 0 1 1.5 0v1.5A1.75 1.75 0 0 1 9.25 16h-7.5A1.75 1.75 0 0 1 0 14.25Z" fill="#18181b"/><path d="M5 1.75C5 .784 5.784 0 6.75 0h7.5C15.216 0 16 .784 16 1.75v7.5A1.75 1.75 0 0 1 14.25 11h-7.5A1.75 1.75 0 0 1 5 9.25Zm1.75-.25a.25.25 0 0 0-.25.25v7.5c0 .138.112.25.25.25h7.5a.25.25 0 0 0 .25-.25v-7.5a.25.25 0 0 0-.25-.25Z" fill="#18181b"/></svg>
<div class="t m" style="left:998.00px;top:1169.00px;font-size:17.2px;letter-spacing:-0.55px;color:#18181b">Normal file</div>
<div class="btn" style="left:1761px;top:1156.90px;width:96px;height:38px"></div>
<div class="btn" style="left:1862px;top:1156.90px;width:90px;height:38px"></div>
<div class="t bt" style="left:1777.4px;top:1168.90px;font-size:15px;color:#202024;letter-spacing:-0.39px">Unescape</div>
<div class="t bt" style="left:1877.7px;top:1168.90px;font-size:15px;color:#202024;letter-spacing:-0.33px">View File</div>
<div class="abs" style="left:428px;top:1201.9px;width:1534px;height:35.4px;background:#e4e4e7"></div>
<div class="ln" style="top:1207.2px"><code style="left:158.7px;color:#3f3f46">@ -0,0 +1,86 @@</code></div>
<div class="ln add" style="top:1237.10px;height:27px"><div class="b">1</div><div class="g">+</div><code><span class="k">import</span> React <span class="k">from</span> <span class="st">'react'</span>;</code></div>
<div class="ln add" style="top:1264.10px;height:27px"><div class="b">2</div><div class="g">+</div></div>
<div class="ln add" style="top:1291.10px;height:27px"><div class="b">3</div><div class="g">+</div><code><span class="k">interface</span> MealPlanCellProps {</code></div>
<div class="ln add" style="top:1318.10px;height:27px"><div class="b">4</div><div class="g">+</div><code>    dayIdx: <span class="kt">number</span>;</code></div>
<div class="ln add" style="top:1345.10px;height:27px"><div class="b">5</div><div class="g">+</div><code>    <span class="k">type:</span> <span class="kt">string</span>;</code></div>
<div class="ln add" style="top:1372.10px;height:27px"><div class="b">6</div><div class="g">+</div><code>    cell<span class="k">:</span> {</code></div>
<div class="ln add" style="top:1399.10px;height:27px"><div class="b">7</div><div class="g">+</div><code>        assignedToId: <span class="kt">number</span> <span class="k">|</span> <span class="kt">string</span> <span class="k">|</span> <span class="k">null</span>;</code></div>
<div class="ln add" style="top:1426.10px;height:27px"><div class="b">8</div><div class="g">+</div><code>        assignedToName: <span class="kt">string</span>;</code></div>
<div class="ln add" style="top:1453.10px;height:27px"><div class="b">9</div><div class="g">+</div><code>        description: <span class="kt">string</span>;</code></div>
<div class="ln add" style="top:1480.10px;height:27px"><div class="b">10</div><div class="g">+</div><code>    };</code></div>
<div class="ln add" style="top:1507.10px;height:27px"><div class="b">11</div><div class="g">+</div><code>    currentUserId?: <span class="kt">number</span> <span class="k">|</span> <span class="kt">string</span>;</code></div>
<div class="ln add" style="top:1534.10px;height:27px"><div class="b">12</div><div class="g">+</div><code>    isEditing: <span class="kt">boolean</span>;</code></div>
<div class="ln add" style="top:1561.10px;height:27px"><div class="b">13</div><div class="g">+</div><code>    editDesc: <span class="kt">string</span>;</code></div>
<div class="ln add" style="top:1588.10px;height:27px"><div class="b">14</div><div class="g">+</div><code>    setEditDesc<span class="k">:</span> (desc: <span class="kt">string</span>) <span class="k">=&gt;</span> <span class="k">void</span>;</code></div>
<div class="ln add" style="top:1615.10px"></div>
<div class="abs" style="left:0;top:1620px;width:2019px;height:2px;background:#000"></div>

</body>
</html>
